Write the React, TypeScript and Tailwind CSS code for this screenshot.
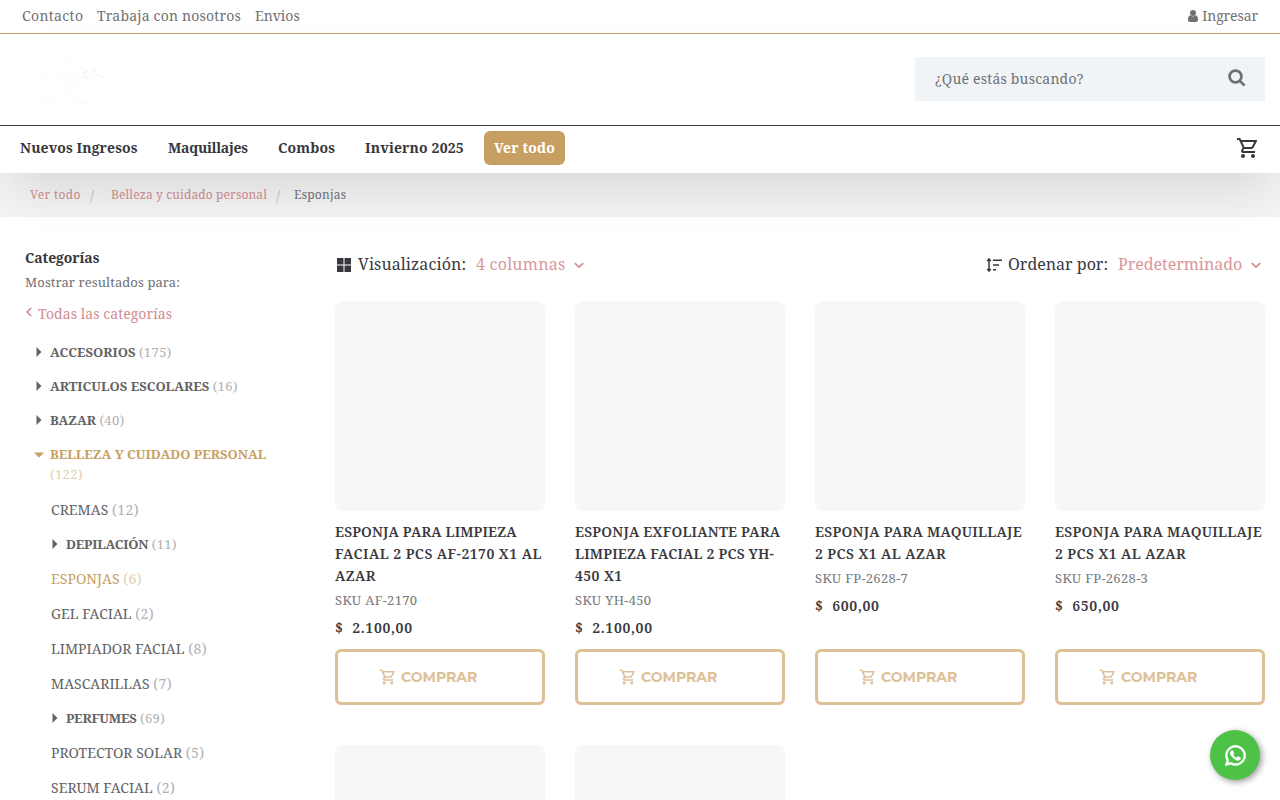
import React from "react";
import { MdOutlineShoppingCart } from "react-icons/md";
import { FaWhatsapp } from "react-icons/fa";

type Category = { name: string; count: number; bold?: boolean; active?: boolean; height: string; sub?: boolean };

const categories: Category[] = [
  { name: "ACCESORIOS", count: 175, bold: true, height: "h-[34px]" },
  { name: "ARTICULOS ESCOLARES", count: 16, bold: true, height: "h-[34px]" },
  { name: "BAZAR", count: 40, bold: true, height: "h-[34px]" },
  { name: "BELLEZA Y CUIDADO PERSONAL", count: 122, bold: true, active: true, height: "h-[55px]" },
  { name: "CREMAS", count: 12, sub: true, height: "h-[35px]" },
  { name: "DEPILACIÓN", count: 11, sub: true, bold: true, height: "h-[34px]" },
  { name: "ESPONJAS", count: 6, sub: true, active: true, height: "h-[35px]" },
  { name: "GEL FACIAL", count: 2, sub: true, height: "h-[35px]" },
  { name: "LIMPIADOR FACIAL", count: 8, sub: true, height: "h-[35px]" },
  { name: "MASCARILLAS", count: 7, sub: true, height: "h-[35px]" },
  { name: "PERFUMES", count: 69, sub: true, bold: true, height: "h-[34px]" },
  { name: "PROTECTOR SOLAR", count: 5, sub: true, height: "h-[35px]" },
  { name: "SERUM FACIAL", count: 2, sub: true, height: "h-[35px]" },
];

type Line = [text: string, tracking: string];
const products: { lines: Line[]; sku: string; price: string }[] = [
  { lines: [["ESPONJA PARA LIMPIEZA", "tracking-[0.15px]"], ["FACIAL 2 PCS AF-2170 X1 AL", "tracking-[0.46px]"], ["AZAR", "tracking-[0.4px]"]], sku: "AF-2170", price: "2.100,00" },
  { lines: [["ESPONJA EXFOLIANTE PARA", "tracking-[0.22px]"], ["LIMPIEZA FACIAL 2 PCS YH-", "tracking-[0.18px]"], ["450 X1", "tracking-[0.4px]"]], sku: "YH-450", price: "2.100,00" },
  { lines: [["ESPONJA PARA MAQUILLAJE", "tracking-[0.26px]"], ["2 PCS X1 AL AZAR", "tracking-[0.42px]"]], sku: "FP-2628-7", price: "600,00" },
  { lines: [["ESPONJA PARA MAQUILLAJE", "tracking-[0.26px]"], ["2 PCS X1 AL AZAR", "tracking-[0.42px]"]], sku: "FP-2628-3", price: "650,00" },
];

function Caret({ open }: { open?: boolean }) {
  return open ? (
    <svg width="10" height="6" viewBox="0 0 10 6" fill="currentColor"><path d="M0 .5h10L5 5.5z" /></svg>
  ) : (
    <svg width="6" height="10" viewBox="0 0 6 10" fill="currentColor"><path d="M.5 0v10L5.5 5z" /></svg>
  );
}

function Chevron() {
  return (
    <svg width="10" height="7" viewBox="0 0 10 7" fill="none" stroke="currentColor" strokeWidth="1.6" className="mt-0.5"><path d="M.8 1.2L5 5.2l4.2-4" /></svg>
  );
}

function CategoryRow({ c }: { c: Category }) {
  const open = c.active && !c.sub;
  return (
    <li className={`${c.height} flex ${c.active ? "text-[#c89f62]" : "text-[#636366]"} ${c.sub ? "pl-[26px]" : "pl-[9px]"} ${c.sub && !c.bold ? "pt-px" : ""}`}>
      {c.bold && (
        <span className={`flex h-5 shrink-0 items-center ${c.sub ? "w-[15px]" : "w-4"}`}>
          <span className={open ? "pt-0.5" : c.sub ? "pl-px" : "pl-0.5"}><Caret open={open} /></span>
        </span>
      )}
      <span className={`block leading-5 ${c.bold ? "text-[13px]" : "text-[14px]"}`}>
        <span className={c.bold ? (c.sub ? "font-bold tracking-[-0.2px]" : "font-bold tracking-[0.01px]") : "tracking-[0.03px]"}>{c.name}</span>
        {open ? <br /> : " "}
        <span className="tracking-[0.4px] opacity-50">({c.count})</span>
      </span>
    </li>
  );
}

export default function App() {
  return (
    <div className="h-[800px] w-[1280px] overflow-hidden whitespace-nowrap bg-white font-['Noto_Serif','Droid_Serif','DejaVu_Serif_Condensed','DejaVu_Serif',serif] text-[#6f7073]">
      <div className="flex h-[34px] items-center justify-between border-b border-[#c89f62] px-[22px] text-[14px]">
        <nav className="flex gap-[14px] pb-0.5"><a className="w-[61px] tracking-[0.37px]">Contacto</a><a className="w-[144px] tracking-[0.2px]">Trabaja con nosotros</a><a>Envios</a></nav>
        <a className="flex items-center gap-1 pb-0.5">
          <svg width="10" height="12" viewBox="0 0 10 12" fill="currentColor"><circle cx="5" cy="3" r="3" /><path d="M2.400 5.300C.6 5.600 0 7.500 0 9.700 0 11 .8 12 2 12h6c1.200 0 2-1 2-2.300 0-2.200-.6-4.100-2.400-4.400-1.500 1.500-3.700 1.500-5.200 0z" /></svg>
          <span className="tracking-[-0.1px]">Ingresar</span>
        </a>
      </div>
      <header className="relative shadow-[0_25px_50px_-12px_rgba(0,0,0,0.12)]">
        <div className="flex h-[92px] justify-between border-b border-[#38383c] bg-white px-[15px] pt-[23px]">
          <svg width="106" height="60" viewBox="0 0 106 60" fill="none" stroke="#fcfaf7" strokeWidth="0.8">
            <circle cx="50" cy="18" r="18" />
            <path d="M3 18c8-4 14 1 24 1 14 0 25-7 26-15-3 5-9 17-10 21 4-1 8-4 10-8-2 5 1 7 5-1-3 6 0 8 6-1-3 8-8 17-13 19 0-8 12-14 19-16 10-1 20 4 30-1" />
            <path d="M67 18q3-6 7-5-2 4-7 5zM75 16q3-6 8-5-2 4-8 5zM78 17q8-1 11 4-6 0-11-4zM68 18q5 0 6 4-5 0-6-4z" fill="#faf7f2" stroke="none" />
            <text x="23" y="49" fontSize="7" letterSpacing="1.800" fill="#fcfaf8" stroke="none">FANCY YOU</text>
          </svg>
          <div className="flex h-11 w-[350px] items-center justify-between bg-[#f0f4f7] pl-5 pr-[19px] text-[14px]">
            <span className="pb-0.5 tracking-[0.2px]">¿Qué estás buscando?</span>
            <svg width="18" height="18" viewBox="0 0 18 18" fill="none" stroke="currentColor" strokeWidth="2.700" className="mb-0.5"><circle cx="7.500" cy="7.500" r="5.900" /><path d="M11.600 11.600l5 5" /></svg>
          </div>
        </div>
        <div className="flex h-[47px] justify-between bg-white pl-[10px] pr-[20px] text-[14px] font-bold text-[#38383c]">
          <nav className="flex gap-[10px] pt-[5px] leading-[33px]">
            <a className="w-[138px] px-[10px] tracking-[0.1px]">Nuevos Ingresos</a>
            <a className="w-[100px] px-[10px] tracking-[-0.3px]">Maquillajes</a>
            <a className="w-[77px] px-[10px] tracking-[0.15px]">Combos</a>
            <a className="w-[119px] px-[10px] tracking-[0.15px]">Invierno 2025</a>
            <a className="h-[34px] w-[81px] rounded-md bg-[#c89f62] px-[10px] tracking-[0.15px] text-white">Ver todo</a>
          </nav>
          <MdOutlineShoppingCart className="mt-[10px] size-6" />
        </div>
      </header>
      <div className="flex h-11 items-center bg-[#f3f3f3] pl-[30px] text-[12px] text-[#d08d90]">
        <a className="w-[51px] tracking-[0.35px]">Ver todo</a><span className="w-[30px] pl-[9px] text-[14px] text-[#bbb]">/</span><a className="w-[156px] tracking-[0.12px]">Belleza y cuidado personal</a><span className="w-[27px] pl-[9px] text-[14px] text-[#bbb]">/</span><span className="tracking-[0.2px] text-[#6f7073]">Esponjas</span>
      </div>
      <div className="flex">
        <aside className="w-[320px] shrink-0 pl-[25px] pt-[31px]">
          <h2 className="text-[14px] font-bold leading-5 tracking-[-0.1px] text-[#38383c]">Categorías</h2>
          <p className="mt-1 text-[13px] leading-5 tracking-[0.09px]">Mostrar resultados para:</p>
          <a className="mt-3 flex text-[14px] leading-5 tracking-[0.07px] text-[#d08d90]">
            <svg width="13" height="16" viewBox="0 0 13 16" fill="none" stroke="currentColor" strokeWidth="1.600"><path d="M6.200 4.200L2 8l4.200 4" /></svg>Todas las categorías
          </a>
          <ul className="mt-[18px]">{categories.map((c) => <CategoryRow key={c.name} c={c} />)}</ul>
        </aside>
        <main className="w-[945px] pl-[15px]">
          <div className="flex h-[84px] items-start justify-between pt-[35px] text-[16px] leading-6 text-[#38383c]">
            <div className="flex items-center">
              <svg width="14" height="14" viewBox="0 0 14 14" fill="currentColor" className="ml-0.5 mr-[7px] mt-0.5"><path d="M0 0h6.500v6.500H0zM7.500 0H14v6.500H7.500zM0 7.500h6.500V14H0zM7.500 7.500H14V14H7.500z" /></svg>
              <span className="w-[108px] tracking-[0.1px]">Visualización:</span><span className="ml-[10px] mr-[9px] w-[89px] tracking-[0.24px] text-[#d9979a]">4 columnas</span><span className="text-[#d08d90]"><Chevron /></span>
            </div>
            <div className="flex items-center pr-1">
              <svg width="16" height="14" viewBox="0 0 16 14" fill="none" stroke="currentColor" strokeWidth="1.500" className="mr-[6px] mt-0.5"><path d="M3 2v10M1.200 3L3 1l1.800 2M1.200 11L3 13l1.800-2M7 2.200h9M7 7h6M7 11.700h3" /></svg>
              <span className="w-[100px]">Ordenar por:</span><span className="ml-[10px] mr-[9px] w-[124px] tracking-[-0.02px] text-[#d9979a]">Predeterminado</span><span className="text-[#d08d90]"><Chevron /></span>
            </div>
          </div>
          <div className="grid grid-cols-4 gap-x-[30px]">
            {products.map((p) => (
              <article key={p.sku} className="flex h-[404px] flex-col">
                <div className="h-[210px] shrink-0 rounded-lg bg-[#f7f7f7]" />
                <h3 className="mt-[10px] text-[14px] font-semibold leading-[22px] text-[#38383c]">
                  {p.lines.map(([text, tracking]) => <span key={text} className={`block ${tracking}`}>{text}</span>)}
                </h3>
                <p className="mt-[3px] text-[13px] leading-5 tracking-[0.33px] text-[#77787b]">SKU {p.sku}</p>
                <p className="mt-[7px] whitespace-pre text-[14px] font-semibold leading-[22px] tracking-[0.68px] text-[#38383c]">$  {p.price}</p>
                <button className="mt-auto flex h-14 shrink-0 items-center rounded-md border-[3px] border-[#dec096] pl-[41px] font-['Montserrat','Inter',sans-serif] text-[14px] font-bold text-[#dec096]">
                  <MdOutlineShoppingCart className="mr-1 size-[18px]" />COMPRAR
                </button>
              </article>
            ))}
          </div>
          <div className="mt-10 grid grid-cols-4 gap-x-[30px]"><div className="h-[210px] rounded-lg bg-[#f7f7f7]" /><div className="h-[210px] rounded-lg bg-[#f7f7f7]" /></div>
        </main>
      </div>
      <a className="fixed bottom-5 right-5 flex size-[50px] items-center justify-center rounded-full bg-[#4dc247] text-white shadow-[2px_2px_6px_rgba(0,0,0,0.4)]"><FaWhatsapp className="size-[23px] overflow-visible stroke-current [stroke-width:16]" /></a>
    </div>
  );
}
